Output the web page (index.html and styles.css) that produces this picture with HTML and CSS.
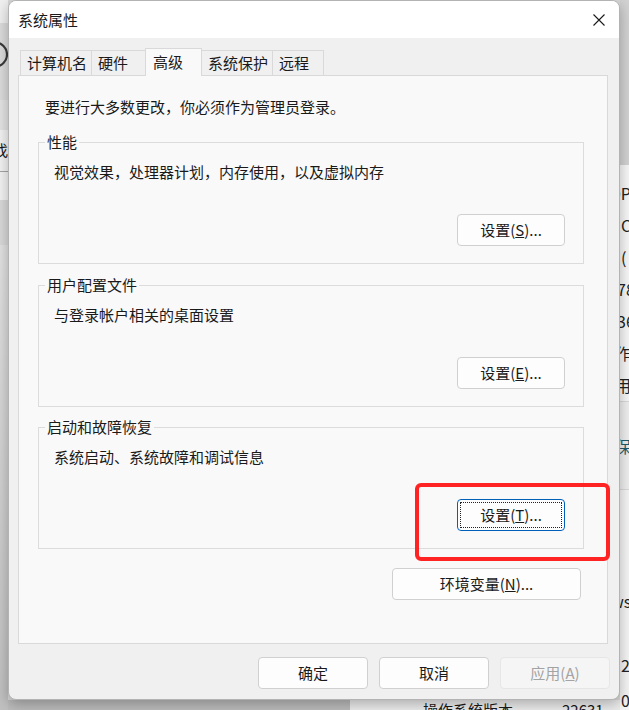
FILE: index.html
```html
<!DOCTYPE html>
<html lang="zh-CN">
<head>
<meta charset="utf-8">
<title>系统属性</title>
<link rel="stylesheet" href="styles.css">
</head>
<body>
<div class="desk">
  <div class="strip-left">
    <div class="seg seg-a"></div>
    <div class="seg seg-b">
      <svg class="arc" width="8" height="30" viewBox="0 0 8 30"><circle cx="-5" cy="14.5" r="12" fill="none" stroke="#3a3a3a" stroke-width="2.2"/></svg>
    </div>
    <div class="seg seg-c"></div>
    <div class="seg seg-d"><span class="cut-l">找</span></div>
    <div class="seg seg-e"></div>
    <div class="seg seg-f"></div>
    <div class="seg seg-g"></div>
  </div>

  <div class="window">
    <div class="titlebar">
      <span class="title">系统属性</span>
      <svg class="close" width="12" height="12" viewBox="0 0 12 12"><path d="M0.5 0.5 L11.5 11.5 M11.5 0.5 L0.5 11.5" stroke="#1a1a1a" stroke-width="1.1" fill="none"/></svg>
    </div>
    <div class="body">
      <div class="tabs">
        <div class="tab t1">计算机名</div>
        <div class="tab t2">硬件</div>
        <div class="tab t3 active">高级</div>
        <div class="tab t4">系统保护</div>
        <div class="tab t5">远程</div>
      </div>
      <div class="panel">
        <p class="intro">要进行大多数更改，你必须作为管理员登录。</p>
        <div class="group g1">
          <span class="legend">性能</span>
          <p class="gdesc">视觉效果，处理器计划，内存使用，以及虚拟内存</p>
          <button class="btn gbtn">设置(<u>S</u>)...</button>
        </div>
        <div class="group g2">
          <span class="legend">用户配置文件</span>
          <p class="gdesc">与登录帐户相关的桌面设置</p>
          <button class="btn gbtn">设置(<u>E</u>)...</button>
        </div>
        <div class="group g3">
          <span class="legend">启动和故障恢复</span>
          <p class="gdesc">系统启动、系统故障和调试信息</p>
          <button class="btn gbtn focus">设置(<u>T</u>)...</button>
        </div>
        <button class="btn envbtn">环境变量(<u>N</u>)...</button>
      </div>
      <div class="actions">
        <button class="btn act">确定</button>
        <button class="btn act">取消</button>
        <button class="btn act disabled">应用(<u>A</u>)</button>
      </div>
    </div>
  </div>

  <div class="strip-right">
    <div class="rs-top"></div>
    <div class="rs-list">
      <div class="rrow"><span class="c1">OP</span></div>
      <div class="rrow"><span class="c0">C</span></div>
      <div class="rrow"><span class="c0">(</span></div>
      <div class="rrow"><span class="c2">78</span></div>
      <div class="rrow"><span class="c2">36</span></div>
      <div class="rrow"><span class="c3">作</span></div>
      <div class="rrow"><span class="c3">用</span></div>
    </div>
    <div class="rs-mid"><span class="c3">保</span></div>
    <div class="rs-low">
      <div class="lrow r1"><span class="c4">ws</span></div>
      <div class="lrow r2"><span class="c0">2</span></div>
      <div class="lrow r3"><span class="c0">05</span></div>
    </div>
  </div>

  <div class="strip-bottom">
    <div class="bs-left"></div>
    <div class="bs-right"><span class="bs-t1">操作系统版本</span><span class="bs-t2">22631</span></div>
  </div>
</div>
<div class="highlight"></div>
</body>
</html>
```

FILE: styles.css
```css
* { box-sizing: border-box; }
html, body { margin: 0; padding: 0; }
body {
  width: 629px;
  height: 710px;
  overflow: hidden;
  position: relative;
  font-family: "Noto Sans CJK SC", "Noto Sans", sans-serif;
  font-size: 15px;
  color: #1a1a1a;
  background: #d9d9d9;
}

.desk {
  display: grid;
  grid-template-columns: 8px 612px 9px;
  grid-template-rows: 700px 10px;
}

/* left background strip */
.strip-left {
  grid-column: 1;
  grid-row: 1 / 3;
  display: flex;
  flex-direction: column;
  overflow: hidden;
}
.seg-a { height: 23px; background: #f0f0f0; }
.seg-b { height: 77px; background: #dcdcdc; padding-top: 17px; }
.arc { display: block; }
.seg-c { height: 30px; background: #e4e4e4; }
.seg-d {
  height: 42px;
  background: #f3f3f3;
  border-bottom: 1px solid #a5a5a5;
  line-height: 40px;
  white-space: nowrap;
}
.cut-l { display: inline-block; margin-left: -7px; }
.seg-e { height: 28px; background: #f3f3f3; }
.seg-f { height: 45px; background: #d9d9d9; }
.seg-g { flex: 1; background: linear-gradient(#e2e2e2, #c0c0c0); }

/* window */
.window {
  grid-column: 2;
  grid-row: 1;
  display: flex;
  flex-direction: column;
  background: #f0f0f0;
  border: 1px solid #b3b3b3;
  border-radius: 8px;
  box-shadow: 0 4px 14px rgba(0, 0, 0, 0.28);
  position: relative;
  z-index: 1;
  overflow: hidden;
}
.titlebar {
  height: 37px;
  flex: none;
  background: #ffffff;
  display: flex;
  align-items: center;
  justify-content: space-between;
  padding: 0 14px 0 9px;
}
.title { line-height: 20px; }
.close { display: block; }

.body {
  flex: 1;
  display: flex;
  flex-direction: column;
  padding: 10px 9px 10px 9px;
}

.tabs {
  display: flex;
  align-items: flex-end;
  height: 27px;
  margin-left: 2px;
  position: relative;
  z-index: 1;
}
.tab {
  height: 25px;
  border: 1px solid #d9d9d9;
  border-bottom: none;
  background: #f0f0f0;
  padding-left: 6px;
  line-height: 23px;
  white-space: nowrap;
  margin-left: -1px;
}
.tab.t1 { margin-left: 0; width: 72px; }
.tab.t2 { width: 55px; }
.tab.t3 { width: 57px; }
.tab.t4 { width: 72px; }
.tab.t5 { width: 52px; }
.tab.active {
  height: 28px;
  margin-bottom: -1px;
  background: #f9f9f9;
  padding-left: 7px;
  line-height: 26px;
  position: relative;
  z-index: 2;
}

.panel {
  height: 569px;
  margin-right: 2px;
  border: 1px solid #d9d9d9;
  background: #f9f9f9;
  padding: 0 0 0 19px;
  display: flex;
  flex-direction: column;
}
.intro {
  margin: 21px 0 0 7px;
  line-height: 20px;
}
.group {
  position: relative;
  width: 546px;
  height: 122px;
  border: 1px solid #dcdcdc;
  display: flex;
  flex-direction: column;
  padding: 19px 18px 17px 15px;
}
.g1 { margin-top: 25px; }
.g2 { margin-top: 21px; }
.g3 { margin-top: 20px; }
.legend {
  position: absolute;
  left: 6px;
  top: -11px;
  line-height: 20px;
  padding: 0 2px;
  background: #f9f9f9;
}
.gdesc { margin: 0; line-height: 20px; }

.btn {
  height: 32px;
  border: 1px solid #d0d0d0;
  border-radius: 4px;
  background: #fdfdfd;
  font-family: inherit;
  font-size: 15px;
  line-height: 20px;
  color: #1a1a1a;
  padding: 0;
  text-align: center;
}
.gbtn {
  margin-top: auto;
  align-self: flex-end;
  width: 108px;
}
.focus {
  border-color: #0060b8;
  position: relative;
}
.focus::after {
  content: "";
  position: absolute;
  inset: 2px;
  border: 1px dotted #222;
}
.envbtn {
  align-self: flex-end;
  width: 189px;
  margin-top: 19px;
  margin-right: 26px;
}

.actions {
  display: flex;
  justify-content: flex-end;
  gap: 11px;
  margin-top: 13px;
}
.act { width: 110px; }
.disabled {
  background: #f5f5f5;
  border-color: #e6e6e6;
  color: #a3a3a3;
}

/* right background strip */
.strip-right {
  grid-column: 3;
  grid-row: 1 / 3;
  display: flex;
  flex-direction: column;
  overflow: hidden;
  font-size: 16px;
  color: #222;
  white-space: nowrap;
}
.rs-top { height: 165px; flex: none; background: #d2d2d2; }
.rs-list {
  height: 237px;
  flex: none;
  background: #f7f7f7;
  padding-top: 12px;
  border-bottom: 1px solid #dadada;
}
.rrow { height: 32px; line-height: 32px; }
.c0 { display: inline-block; margin-left: 1px; }
.c1 { display: inline-block; margin-left: -11px; }
.c2 { display: inline-block; margin-left: -3px; }
.c3 { display: inline-block; margin-left: -5px; }
.c4 { display: inline-block; margin-left: -9px; }
.rs-mid {
  height: 88px;
  flex: none;
  background: #efefef;
  border-bottom: 1px solid #dadada;
  padding-top: 34px;
  line-height: 20px;
  color: #1e5a6a;
}
.rs-low {
  flex: 1;
  background: #f5f5f5;
  padding-top: 101px;
}
.lrow { line-height: 20px; height: 20px; }
.r2 { margin-top: 44px; }
.r3 { margin-top: 15px; }

/* bottom background strip */
.strip-bottom {
  grid-column: 2;
  grid-row: 2;
  display: flex;
  overflow: hidden;
}
.bs-left { width: 342px; background: #bcbcbc; }
.bs-right {
  flex: 1;
  background: #ececec;
  padding-left: 73px;
  line-height: 20px;
  white-space: nowrap;
  overflow: hidden;
}
.bs-t2 { margin-left: 49px; }

/* annotation overlay */
.highlight {
  position: absolute;
  left: 415px;
  top: 483px;
  width: 195px;
  height: 78px;
  border: 4px solid #ff2323;
  border-radius: 6px;
  z-index: 5;
}
```
